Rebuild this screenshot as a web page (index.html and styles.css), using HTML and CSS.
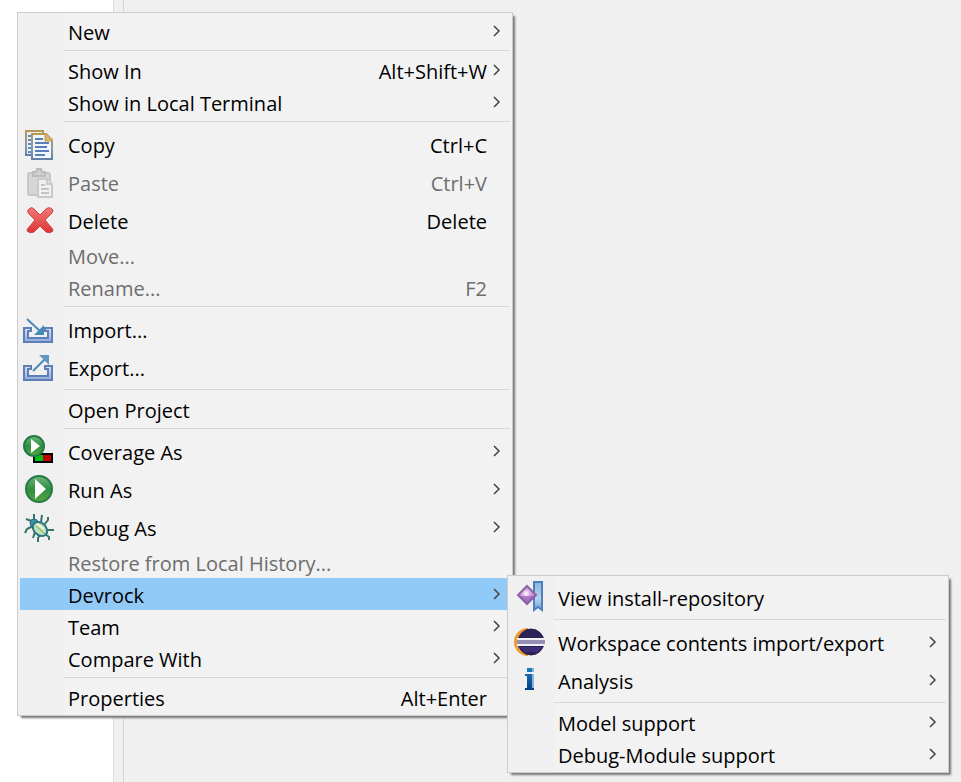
FILE: index.html
```html
<!DOCTYPE html>
<html lang="en">
<head>
<meta charset="utf-8">
<title>Context menu</title>
<link rel="stylesheet" href="styles.css">
</head>
<body>
<svg class="defs" aria-hidden="true">
  <defs>
    <symbol id="chevron" viewBox="0 0 8 12"><path d="M1 1l5 5-5 5" fill="none" stroke="#444" stroke-width="1.500"/></symbol>
    <linearGradient id="green" x1="0" y1="0" x2="0" y2="1"><stop offset="0" stop-color="#6fb97a"/><stop offset=".5" stop-color="#2f8d42"/><stop offset="1" stop-color="#55a83f"/></linearGradient>
    <linearGradient id="tray" x1="0" y1="0" x2="0" y2="1"><stop offset="0" stop-color="#dbe6f4"/><stop offset="1" stop-color="#8eabdb"/></linearGradient>
    <linearGradient id="red" x1="0" y1="0" x2="0" y2="1"><stop offset="0" stop-color="#f27a78"/><stop offset="1" stop-color="#dc3434"/></linearGradient>
    <linearGradient id="page" x1="0" y1="0" x2="0" y2="1"><stop offset="0" stop-color="#b99750"/><stop offset=".6" stop-color="#8d99a5"/><stop offset="1" stop-color="#627fa8"/></linearGradient>
    <linearGradient id="ribbon" x1="0" y1="0" x2="0" y2="1"><stop offset="0" stop-color="#8eb2d8"/><stop offset=".6" stop-color="#b9d3ec"/><stop offset="1" stop-color="#6d9fd2"/></linearGradient>
    <radialGradient id="gem" cx=".45" cy=".42" r=".5"><stop offset="0" stop-color="#fff"/><stop offset=".4" stop-color="#dfaee8"/><stop offset="1" stop-color="#b07cc4"/></radialGradient>
    <linearGradient id="info" x1="0" y1="0" x2="0" y2="1"><stop offset="0" stop-color="#1f7bb8"/><stop offset="1" stop-color="#003f87"/></linearGradient>
    <symbol id="tray-shape" viewBox="0 0 32 32"><path d="M1 15h7v3H5v7h20v-7h-3v-3h7v14H1z" fill="url(#tray)" stroke="#5f7db8" stroke-width="2"/></symbol>
  </defs>
</svg>
<main class="workbench">
  <div class="tree"></div>
  <div class="sash"></div>
  <div class="editor"></div>
</main>

<div class="menu context" role="menu" aria-label="Project">
  <button class="item" role="menuitem"><span class="label">New</span><svg class="chevron"><use href="#chevron"/></svg></button>
  <hr>
  <button class="item" role="menuitem"><span class="label">Show In</span><kbd>Alt+Shift+W</kbd><svg class="chevron"><use href="#chevron"/></svg></button>
  <button class="item" role="menuitem"><span class="label">Show in Local Terminal</span><svg class="chevron"><use href="#chevron"/></svg></button>
  <hr>
  <button class="item tall" role="menuitem">
    <svg class="icon" viewBox="0 0 32 32">
      <path d="M3 3h17v24H3z" fill="#e4edf8" stroke="url(#page)" stroke-width="2"/>
      <path d="M5 8h3M5 12h3M5 16h3M5 20h3M5 24h3" stroke="#5d8fc2" stroke-width="2"/>
      <path d="M9 6h14l6 6v19H9z" fill="#f1f6fd" stroke="url(#page)" stroke-width="2"/>
      <path d="M22 5l8 8h-8z" fill="#d8b66a"/><path d="M22 6v7h7" fill="none" stroke="#b99750"/>
      <path d="M12 11h8M12 15h14M12 19h12M12 23h14M12 27h10" stroke="#5681b8" stroke-width="2"/>
    </svg><span class="label">Copy</span><kbd>Ctrl+C</kbd></button>
  <button class="item tall" role="menuitem" disabled>
    <svg class="icon" viewBox="0 0 32 32">
      <rect x="5" y="7" width="22" height="22" rx="2" fill="#d6d6d6" stroke="#c6c6c6" stroke-width="2"/>
      <path d="M10 10V6h3l1-3h4l1 3h3v4z" fill="#d0d0d0" stroke="#bcbcbc" stroke-width="2"/>
      <path d="M15 13h9l5 5v13H15z" fill="#f0f0f0" stroke="#cacaca" stroke-width="2"/>
      <path d="M24 13v5h5" fill="#ddd" stroke="#cacaca" stroke-width="2"/>
      <path d="M18 19h4M18 23h8M18 27h8" stroke="#c4c4c4" stroke-width="2"/>
    </svg><span class="label">Paste</span><kbd>Ctrl+V</kbd></button>
  <button class="item tall" role="menuitem">
    <svg class="icon" viewBox="0 0 32 32">
      <path d="M5 6q3-4 6-1l6 6 6-6q4-3 7 1 0 3-3 5l-5 5 5 6q3 2 3 5-3 3-7 1l-6-6-6 6q-4 2-7-1 0-3 3-5l5-6-5-5q-3-2-2-5z" fill="url(#red)" stroke="#cb4144"/>
    </svg><span class="label">Delete</span><kbd>Delete</kbd></button>
  <button class="item" role="menuitem" disabled><span class="label">Move...</span></button>
  <button class="item" role="menuitem" disabled><span class="label">Rename...</span><kbd>F2</kbd></button>
  <hr>
  <button class="item tall" role="menuitem">
    <svg class="icon" viewBox="0 0 32 32">
      <use href="#tray-shape"/>
      <path d="M4 6l14 13" stroke="#4789b7" stroke-width="2"/><path d="M21 12v10H11z" fill="#4789b7"/>
    </svg><span class="label">Import...</span></button>
  <button class="item tall" role="menuitem">
    <svg class="icon" viewBox="0 0 32 32">
      <use href="#tray-shape"/>
      <path d="M10 20L22 8" stroke="#4789b7" stroke-width="2"/><path d="M16 4h10v10z" fill="#5e98be"/>
    </svg><span class="label">Export...</span></button>
  <hr>
  <button class="item" role="menuitem"><span class="label">Open Project</span></button>
  <hr>
  <button class="item tall" role="menuitem">
    <svg class="icon" viewBox="0 0 32 32">
      <path d="M10 18h20v10H10z"/><path d="M12 20h8v6h-8z" fill="#00c013"/><path d="M20 20h8v6h-8z" fill="#c20000"/>
      <circle cx="11" cy="11" r="10" fill="url(#green)" stroke="#267a45" stroke-width="2"/><path d="M8 4l9 7-9 7z" fill="#fff"/>
    </svg><span class="label">Coverage As</span><svg class="chevron"><use href="#chevron"/></svg></button>
  <button class="item tall" role="menuitem">
    <svg class="icon" viewBox="0 0 32 32">
      <circle cx="16" cy="16" r="13" fill="url(#green)" stroke="#267a45" stroke-width="2"/><path d="M12 6l11 10-11 10z" fill="#fff"/>
    </svg><span class="label">Run As</span><svg class="chevron"><use href="#chevron"/></svg></button>
  <button class="item tall" role="menuitem">
    <svg class="icon" viewBox="0 0 32 32">
      <path d="M11 11V3M11 11L3 8M18 11l1-7M21 14l4-5V6M23 19h8M10 15l-6 3-2 4M12 21l-2 6M17 24l-2 3v4M22 23l4 3v3" fill="none" stroke="#36756f" stroke-width="2"/>
      <circle cx="11" cy="12" r="4" fill="#3f93a0" stroke="#286985"/>
      <ellipse cx="17" cy="18" rx="8" ry="6" transform="rotate(42 17 18)" fill="#c5e3b4" stroke="#2d7486" stroke-width="2"/>
      <path d="M13 15l9 8" stroke="#6ba676" stroke-width="1"/><path d="M14 13l7 5" stroke="#edf7db" stroke-width="2"/>
    </svg><span class="label">Debug As</span><svg class="chevron"><use href="#chevron"/></svg></button>
  <button class="item" role="menuitem" disabled><span class="label">Restore from Local History...</span></button>
  <div class="branch">
    <button class="item active" role="menuitem" aria-haspopup="menu" aria-expanded="true"><span class="label">Devrock</span><svg class="chevron"><use href="#chevron"/></svg></button>
    <div class="menu submenu" role="menu" aria-label="Devrock">
      <button class="item tall" role="menuitem">
        <svg class="icon" viewBox="0 0 32 32">
          <path d="M21 1h8v28l-4-3-4 3z" fill="url(#ribbon)" stroke="#4a82bf" stroke-width="2"/>
          <path d="M14 5l9 9-9 9-9-9z" fill="url(#gem)" stroke="#8c65a6" stroke-width="2"/>
          <path d="M6 15h16l-8 7z" fill="#8a52ab" opacity=".55"/>
        </svg><span class="label">View install-repository</span></button>
      <hr>
      <button class="item tall" role="menuitem">
        <svg class="icon" viewBox="0 0 32 32">
          <path d="M15 2A14 14 0 0 0 15 30z" fill="#f19a35"/><path d="M15 4A13 13 0 0 0 15 28z" fill="#f7dcb8"/>
          <circle cx="18" cy="16" r="13" fill="#2c2255" stroke="#2c2255"/>
          <path d="M7 21h22l-4 5H11z" fill="#3d2d78"/>
          <path d="M4 12h28v8H4z" fill="#f1f0f5"/><path d="M4 14h28v4H4z" fill="#9790b5"/>
        </svg><span class="label">Workspace contents import/export</span><svg class="chevron"><use href="#chevron"/></svg></button>
      <button class="item tall" role="menuitem">
        <svg class="icon" viewBox="0 0 32 32">
          <path d="M14 4h5v4h-5zM12 10h7v14h2v2h-9v-2h2V12h-2z" fill="url(#info)"/><path d="M19 4h2v4h-2zM19 10h2v14h-2z" fill="#86b8dd"/>
        </svg><span class="label">Analysis</span><svg class="chevron"><use href="#chevron"/></svg></button>
      <hr>
      <button class="item" role="menuitem"><span class="label">Model support</span><svg class="chevron"><use href="#chevron"/></svg></button>
      <button class="item" role="menuitem"><span class="label">Debug-Module support</span><svg class="chevron"><use href="#chevron"/></svg></button>
    </div>
  </div>
  <button class="item" role="menuitem"><span class="label">Team</span><svg class="chevron"><use href="#chevron"/></svg></button>
  <button class="item" role="menuitem"><span class="label">Compare With</span><svg class="chevron"><use href="#chevron"/></svg></button>
  <hr>
  <button class="item" role="menuitem"><span class="label">Properties</span><kbd>Alt+Enter</kbd></button>
</div>
</body>
</html>
```
FILE: styles.css
```css
* { box-sizing: border-box; }

body {
  margin: 0;
  font-family: "Open Sans", "Noto Sans", sans-serif;
  font-size: 20px;
  color: #000;
  background: #f0f0f0;
}

.defs { position: absolute; width: 0; height: 0; }

.workbench { display: flex; min-height: 100vh; }
.tree { width: 113px; background: #fff; }
.sash { width: 11px; border-left: 1px solid #dcdcdc; border-right: 1px solid #d5d5d5; }
.editor { flex: 1; }

.menu {
  position: absolute;
  padding: 2px;
  border: 1px solid #ccc;
  background: linear-gradient(to right, #f0f0f0 46px, #f2f2f2 46px);
  box-shadow: 3px 3px 2px -1px #777;
}
.context { left: 17px; top: 12px; min-width: 496px; }
.submenu { left: 487px; top: -3px; min-width: 442px; }
.branch { position: relative; }

.item {
  position: relative;
  display: flex;
  align-items: center;
  width: 100%;
  height: 32px;
  padding: 4px 23px 0 48px;
  border: 0;
  background: transparent;
  color: inherit;
  font: inherit;
  line-height: 28px;
  text-align: left;
  white-space: nowrap;
}
.tall { height: 38px; }
.item:disabled { color: #6d6d6d; }
.active { background: #91c9f7; }

.label { flex: 1; }
kbd { font: inherit; }

.icon {
  position: absolute;
  left: 3px;
  top: 3px;
  width: 32px;
  height: 32px;
}

.chevron {
  position: absolute;
  right: 9px;
  top: calc(50% - 6px);
  width: 8px;
  height: 12px;
}

hr {
  height: 1px;
  margin: 3px 0 3px 44px;
  border: 0;
  background: #d7d7d7;
}
```
